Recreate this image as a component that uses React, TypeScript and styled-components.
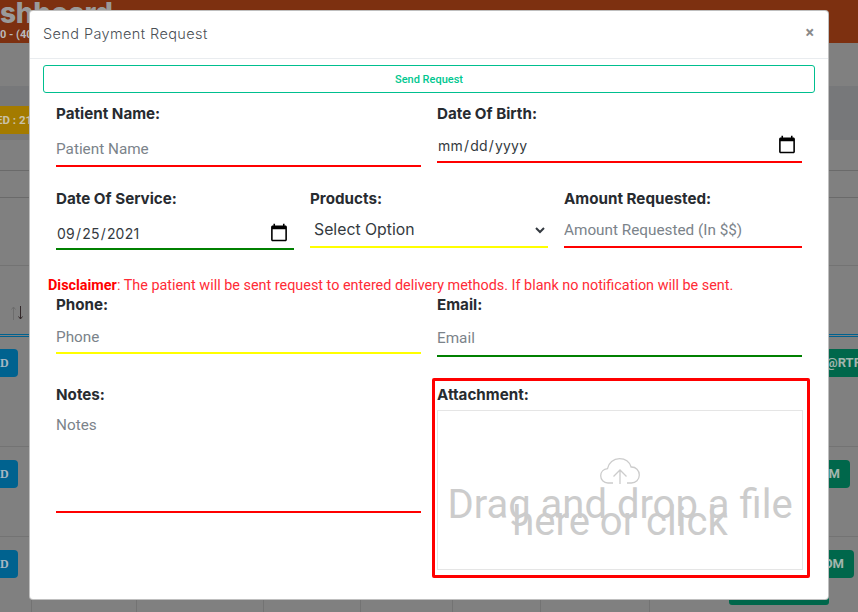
import React from "react";
import styled, { createGlobalStyle } from "styled-components";

const Global = createGlobalStyle`
  html, body { margin: 0; height: 100%; overflow: hidden; background: #808080; }
  #root { height: 100%; }
  * { box-sizing: border-box; }
`;

const Page = styled.div`
  position: relative;
  width: 858px;
  height: 612px;
  overflow: hidden;
  background: #808080;
  font-family: Roboto, sans-serif;
`;

/* ---------- dimmed page behind the dialog ---------- */
const TopBar = styled.header`
  height: 43px;
  background: #7d3010;
  overflow: hidden;
`;
const BrandTitle = styled.div`
  margin: -6px 0 0 -36px;
  font: 800 28px/38px Inter, sans-serif;
  letter-spacing: -0.3px;
  color: #9a9a9a;
  white-space: nowrap;
`;
const BrandSub = styled.div`
  margin-top: -4px;
  font: 700 11px/14px Roboto, sans-serif;
  color: #b9b9b9;
  white-space: nowrap;
`;
const Band = styled.section<{ $h: number; $bg?: string; $line?: string }>`
  height: ${(p) => p.$h}px;
  background: ${(p) => p.$bg ?? "#808080"};
  border-bottom: ${(p) => (p.$line ? `1px solid ${p.$line}` : "none")};
`;
const StatusRow = styled(Band)`
  padding-top: 20px;
`;
const StatusBadge = styled.div`
  width: 60px;
  height: 28px;
  background: #a47b00;
  color: #c9c2a8;
  font: 700 11.500px/28px Roboto, sans-serif;
  white-space: nowrap;
  overflow: hidden;
  text-indent: -4px;
`;
const SortRow = styled.div`
  height: 71px;
  padding: 40px 0 0 11px;
  border-bottom: 3px double #00618f;
`;
const SortArrows = styled.svg`
  display: block;
`;
const DataRow = styled.div<{ $h: number; $line?: boolean; $pad?: number }>`
  display: flex;
  justify-content: space-between;
  height: ${(p) => p.$h}px;
  padding-top: ${(p) => p.$pad ?? 12}px;
  border-bottom: ${(p) => (p.$line ? "1px solid #737373" : "none")};
`;
const BluePill = styled.div`
  width: 18px;
  height: 28px;
  border-radius: 0 4px 4px 0;
  background: #00628f;
  color: #a8b8c2;
  font: 700 12px/28px "Liberation Serif", serif;
  text-align: right;
  padding-right: 10px;
  overflow: hidden;
`;
const ActionStack = styled.div`
  width: 129px;
  flex: none;
`;
const GreenPill = styled.div<{ $w: number }>`
  width: ${(p) => p.$w}px;
  height: 28px;
  border-radius: 0 4px 4px 0;
  background: #00674b;
  color: #a2b5ad;
  font: 700 13px/28px Roboto, sans-serif;
  text-align: right;
  padding-right: 10px;
  white-space: nowrap;
`;
const GreenOverflow = styled(GreenPill)`
  text-align: left;
  padding-left: 97px;
`;
const GreenStub = styled.div<{ $h: number }>`
  width: 100px;
  height: ${(p) => p.$h}px;
  background: #00674b;
  border-radius: 0 0 3px 3px;
`;
const CellRow = styled.div`
  display: flex;
  height: 12px;
`;
const Cell = styled.div<{ $w: number }>`
  width: ${(p) => p.$w}px;
  flex: none;
  border-right: 1px solid #737373;
`;

/* ---------- dialog ---------- */
const Dialog = styled.div`
  position: absolute;
  left: 29px;
  top: 10px;
  width: 800px;
  height: 590px;
  background: #fff;
  border: 1px solid rgba(0, 0, 0, 0.25);
  border-radius: 4px;
`;
const DialogHead = styled.div`
  display: flex;
  align-items: center;
  justify-content: space-between;
  height: 48px;
  padding: 0 14px 0 13px;
  border-bottom: 1px solid #e9ecef;
`;
const DialogTitle = styled.div`
  font: 300 14.500px/20px Inter, sans-serif;
  letter-spacing: 0.4px;
  color: #4a4f55;
  margin-top: -2px;
`;
const CloseButton = styled.button`
  border: 0;
  padding: 0;
  background: none;
  font: 700 16px/16px Roboto, sans-serif;
  color: #8a8a8a;
  margin-top: -4px;
`;
const DialogBody = styled.div`
  padding: 6px 13px 0;
`;
const SendButton = styled.button`
  display: block;
  width: 100%;
  height: 28px;
  padding: 1px 0 0;
  border: 1px solid #00bf8f;
  border-radius: 3px;
  background: #fff;
  color: #00c78f;
  font: 500 11px/16px Roboto, sans-serif;
`;
const Form = styled.form`
  padding: 10px 13px 0 13px;
`;
const FieldRow = styled.div<{ $cols: number; $top?: number }>`
  display: grid;
  grid-template-columns: repeat(${(p) => p.$cols}, 1fr);
  column-gap: 16px;
  align-items: start;
  margin-top: ${(p) => p.$top ?? 21}px;
`;
const Field = styled.div``;
const Label = styled.label`
  display: block;
  height: 21px;
  font: 700 15.200px/21px Inter, sans-serif;
  color: #272b30;
  white-space: nowrap;
`;
const underline = (c: string) => `2px solid ${c}`;
const Input = styled.input<{ $line: string; $h: number; $gap?: number; $pad?: number }>`
  display: block;
  width: 100%;
  height: ${(p) => p.$h}px;
  margin-top: ${(p) => p.$gap ?? 6}px;
  padding: ${(p) => p.$pad ?? 0}px 0 0;
  border: 0;
  border-bottom: ${(p) => underline(p.$line)};
  border-radius: 0;
  outline: 0;
  background: #fff;
  font: 400 15.300px Roboto, sans-serif;
  color: #495057;
  &::placeholder {
    color: #7b838a;
    opacity: 1;
  }
`;
const DateInput = styled(Input)`
  padding: ${(p) => p.$pad ?? 0}px 4px 0 0;
  font: 400 14px Inter, sans-serif;
  letter-spacing: 0.2px;
  color: #343a40;
  &::-webkit-calendar-picker-indicator {
    margin: 0;
    width: 20px;
    height: 20px;
    padding: 1px;
    opacity: 1;
  }
`;
const Select = styled.select`
  display: block;
  width: 100%;
  height: 35px;
  margin-top: 4px;
  padding: 0 6px 0 0;
  border: 0;
  border-bottom: 2px solid #ffff00;
  border-radius: 0;
  outline: 0;
  background: #fff;
  font: 400 15.800px Inter, sans-serif;
  color: #343a40;
`;
const Disclaimer = styled.p`
  margin: 27px 0 0 -8px;
  font: 400 14.400px/18px Roboto, sans-serif;
  color: #ff2b36;
  white-space: nowrap;
`;
const DisclaimerLead = styled.strong`
  font-weight: 700;
  color: #ff0000;
`;
const NotesField = styled.div`
  padding-top: 6px;
`;
const Notes = styled.textarea`
  display: block;
  width: 100%;
  height: 108px;
  margin-top: 0;
  padding: 10px 0 0;
  border: 0;
  border-bottom: 2px solid #ff0000;
  border-radius: 0;
  outline: 0;
  resize: none;
  font: 400 15.300px/21px Roboto, sans-serif;
  &::placeholder {
    color: #7b838a;
    opacity: 1;
  }
`;
const AttachmentBox = styled.div`
  height: 200px;
  margin: 0 -8px 0 -5px;
  padding: 3px 4px 0 2px;
  border: 3px solid #ff0000;
  border-radius: 2px;
`;
const DropZone = styled.div`
  display: flex;
  flex-direction: column;
  align-items: center;
  height: 160px;
  margin-top: 5px;
  padding-top: 47px;
  border: 1px solid #e5e5e5;
  color: #cccccc;
`;
const CloudIcon = styled.svg`
  display: block;
  flex: none;
`;
const DropText = styled.div`
  width: 356px;
  margin-top: 12px;
  font: 400 40px/17px Roboto, sans-serif;
  text-align: center;
`;

const CELLS = [32, 105, 127, 97, 92, 88, 109];

export default function App() {
  return (
    <Page>
      <Global />
      <TopBar>
        <BrandTitle>Dashboard</BrandTitle>
        <BrandSub>0 - (404) 555-0100</BrandSub>
      </TopBar>
      <Band $h={43} />
      <StatusRow $h={54} $bg="#77787a">
        <StatusBadge>ED : 21</StatusBadge>
      </StatusRow>
      <Band $h={31} $line="#6a6a6a" />
      <Band $h={27} $line="#6a6a6a" />
      <Band $h={68} $line="#737373" />
      <SortRow>
        <SortArrows width="12" height="14" viewBox="0 0 12 14" fill="none" strokeWidth="1">
          <path d="M2.500 14V1M.5 3.500 2.500 1l2 2.500" stroke="#6d6d6d" />
          <path d="M9.500 0v13M7.500 10.500l2 2.500 2-2.500" stroke="#33282a" />
        </SortArrows>
      </SortRow>
      <DataRow $h={110} $line>
        <BluePill>D</BluePill>
        <ActionStack>
          <GreenOverflow $w={200}>@RTPAYMENT.COM</GreenOverflow>
          <GreenStub $h={26} />
        </ActionStack>
      </DataRow>
      <DataRow $h={90} $line $pad={13}>
        <BluePill>D</BluePill>
        <ActionStack>
          <GreenPill $w={121}>OM</GreenPill>
          <GreenStub $h={25} />
        </ActionStack>
      </DataRow>
      <DataRow $h={63} $pad={13}>
        <BluePill>D</BluePill>
        <ActionStack>
          <GreenPill $w={125}>OM</GreenPill>
          <GreenStub $h={27} />
        </ActionStack>
      </DataRow>
      <CellRow>
        {CELLS.map((w, i) => (
          <Cell key={i} $w={w} />
        ))}
      </CellRow>

      <Dialog>
        <DialogHead>
          <DialogTitle>Send Payment Request</DialogTitle>
          <CloseButton type="button">×</CloseButton>
        </DialogHead>
        <DialogBody>
          <SendButton type="button">Send Request</SendButton>
          <Form>
            <FieldRow $cols={2} $top={0}>
              <Field>
                <Label>Patient Name:</Label>
                <Input $line="#ff0000" $h={37} $pad={2} placeholder="Patient Name" />
              </Field>
              <Field>
                <Label>Date Of Birth:</Label>
                <DateInput type="date" $line="#ff0000" $h={35} $gap={4} $pad={1} />
              </Field>
            </FieldRow>
            <FieldRow $cols={3}>
              <Field>
                <Label>Date Of Service:</Label>
                <DateInput type="date" defaultValue="2021-09-25" $line="#008000" $h={35} $pad={3} />
              </Field>
              <Field>
                <Label>Products:</Label>
                <Select defaultValue="">
                  <option value="">Select Option</option>
                </Select>
              </Field>
              <Field>
                <Label>Amount Requested:</Label>
                <Input $line="#ff0000" $h={35} $gap={4} $pad={1} placeholder="Amount Requested (In $$)" />
              </Field>
            </FieldRow>
            <Disclaimer>
              <DisclaimerLead>Disclaimer</DisclaimerLead>: The patient will be sent request to entered delivery methods. If blank no notification will be sent.
            </Disclaimer>
            <FieldRow $cols={2} $top={-1}>
              <Field>
                <Label>Phone:</Label>
                <Input $line="#ffff00" $h={33} placeholder="Phone" />
              </Field>
              <Field>
                <Label>Email:</Label>
                <Input $line="#008000" $h={36} placeholder="Email" />
              </Field>
            </FieldRow>
            <FieldRow $cols={2}>
              <NotesField>
                <Label>Notes:</Label>
                <Notes placeholder="Notes" />
              </NotesField>
              <AttachmentBox>
                <Label>Attachment:</Label>
                <DropZone>
                  <CloudIcon width="40" height="26" viewBox="0 0 40 26" fill="none" stroke="currentColor" strokeWidth="1.3">
                    <path d="M13 25H8C3.500 25 .7 21.500.7 17.800.7 14 3.500 11 7.500 10.600 8.500 4.800 13.500.7 19.500.7c5.500 0 10 3.300 11.600 8.300 4.800-.2 8.200 3.600 8.200 8 0 4.600-3.500 8-8 8H27" />
                    <path d="M20 26V12M13.500 18.500 20 12l6.500 6.500" />
                  </CloudIcon>
                  <DropText>Drag and drop a file here or click</DropText>
                </DropZone>
              </AttachmentBox>
            </FieldRow>
          </Form>
        </DialogBody>
      </Dialog>
    </Page>
  );
}
